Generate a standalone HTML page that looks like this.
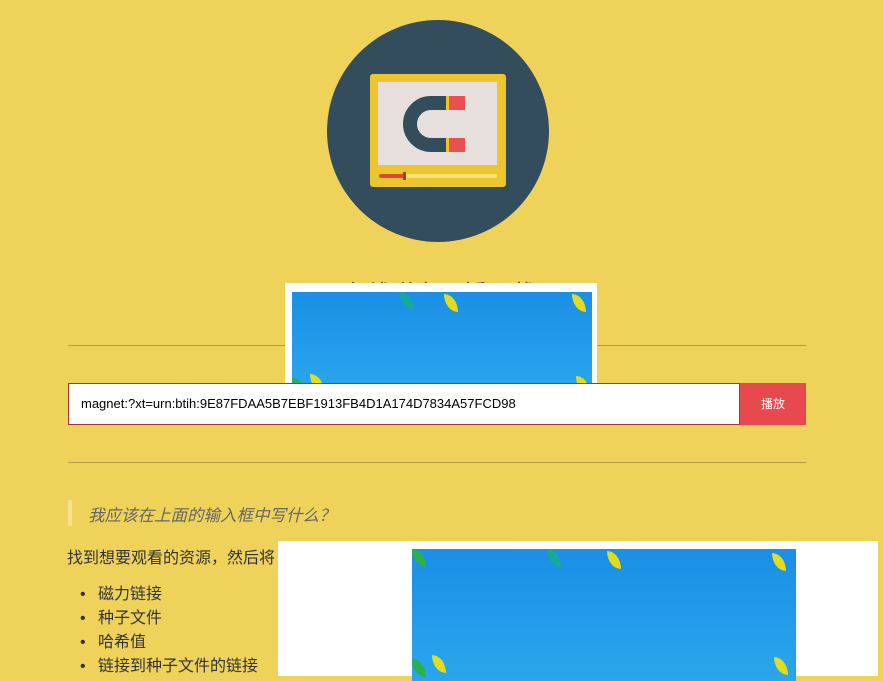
<!DOCTYPE html><html><head><meta charset="utf-8"><style>
body{margin:0;width:883px;height:681px;overflow:hidden;background:#efd25a;font-family:"Liberation Sans","Noto Sans CJK SC",sans-serif;position:relative}
.a{position:absolute}
.blue{background:linear-gradient(180deg,#1a8fe6,#2aa6ec)}
.lf{position:absolute;width:14px;height:18px;border-radius:0 100% 0 100%;}
</style></head><body>
<div class="a" style="left:327px;top:20px;width:222px;height:222px;border-radius:50%;background:#344d5c"></div>
<div class="a" style="left:370px;top:74px;width:136px;height:113px;background:#ecc52f;border-radius:3px"></div>
<div class="a" style="left:378px;top:82px;width:119px;height:83px;background:#e6dfdb"></div>
<div class="a" style="left:379px;top:174px;width:118px;height:4px;background:#f6e27a;border-radius:2px"></div>
<div class="a" style="left:379px;top:174px;width:25px;height:4px;background:#d9482f;border-radius:2px"></div>
<div class="a" style="left:403px;top:172px;width:3px;height:8px;background:#a83a2a"></div>
<svg class="a" style="left:400px;top:94px" width="70" height="60"><path d="M46 9 H31 A21 21 0 0 0 31 51 H46" fill="none" stroke="#344d5c" stroke-width="14"/><rect x="46" y="2" width="3" height="14" fill="#ecc52f"/><rect x="46" y="44" width="3" height="14" fill="#ecc52f"/><rect x="49" y="2" width="16" height="14" fill="#e9504f"/><rect x="49" y="44" width="16" height="14" fill="#e9504f"/></svg>
<div class="a" style="left:343px;top:274px;font-size:24px;color:#555">在线磁力云播下载</div>
<div class="a" style="left:68px;top:345px;width:738px;height:1px;background:#b09a4a"></div>
<div class="a" style="left:68px;top:462px;width:738px;height:1px;background:#b09a4a"></div>
<div class="a" style="left:285px;top:283px;width:312px;height:108px;background:#fff"></div>
<div class="a blue" style="left:292px;top:292px;width:300px;height:99px;overflow:hidden">
<div class="lf" style="left:152px;top:2px;background:#e3dc1a"></div>
<div class="lf" style="left:108px;top:0;background:#17a99a"></div>
<div class="lf" style="left:280px;top:2px;background:#e3dc1a"></div>
<div class="lf" style="left:18px;top:82px;background:#e3dc1a"></div>
<div class="lf" style="left:0;top:86px;background:#2bb04a"></div>
<div class="lf" style="left:284px;top:84px;background:#e3dc1a"></div>
</div>
<div class="a" style="left:68px;top:383px;width:670px;height:40px;background:#fff;border:1px solid #a33"></div>
<div class="a" style="left:81px;top:396px;font-size:13px;color:#000">magnet:?xt=urn:btih:9E87FDAA5B7EBF1913FB4D1A174D7834A57FCD98</div>
<div class="a" style="left:740px;top:383px;width:66px;height:42px;background:#e8494e;color:#fff;font-size:12px;line-height:42px;text-align:center">播放</div>
<div class="a" style="left:68px;top:500px;width:4px;height:26px;background:#f5e28a"></div>
<div class="a" style="left:88px;top:502px;font-size:16.5px;font-style:italic;color:#666">我应该在上面的输入框中写什么？</div>
<div class="a" style="left:67px;top:544px;font-size:16px;color:#333">找到想要观看的资源，然后将</div>
<div class="a" style="left:80px;top:583px;font-size:16px;color:#333;line-height:24px">•<br>•<br>•<br>•</div>
<div class="a" style="left:98px;top:583px;font-size:16px;color:#333;line-height:24px">磁力链接<br>种子文件<br>哈希值<br>链接到种子文件的链接</div>
<div class="a" style="left:278px;top:541px;width:600px;height:135px;background:#fff"></div>
<div class="a blue" style="left:412px;top:549px;width:384px;height:132px;overflow:hidden">
<div class="lf" style="left:195px;top:2px;background:#e3dc1a"></div>
<div class="lf" style="left:135px;top:0;background:#17a99a"></div>
<div class="lf" style="left:0;top:0;background:#2bb04a"></div>
<div class="lf" style="left:360px;top:4px;background:#e3dc1a"></div>
<div class="lf" style="left:20px;top:106px;background:#e3dc1a"></div>
<div class="lf" style="left:0;top:110px;background:#2bb04a"></div>
<div class="lf" style="left:362px;top:108px;background:#e3dc1a"></div>
</div>
</body></html>
